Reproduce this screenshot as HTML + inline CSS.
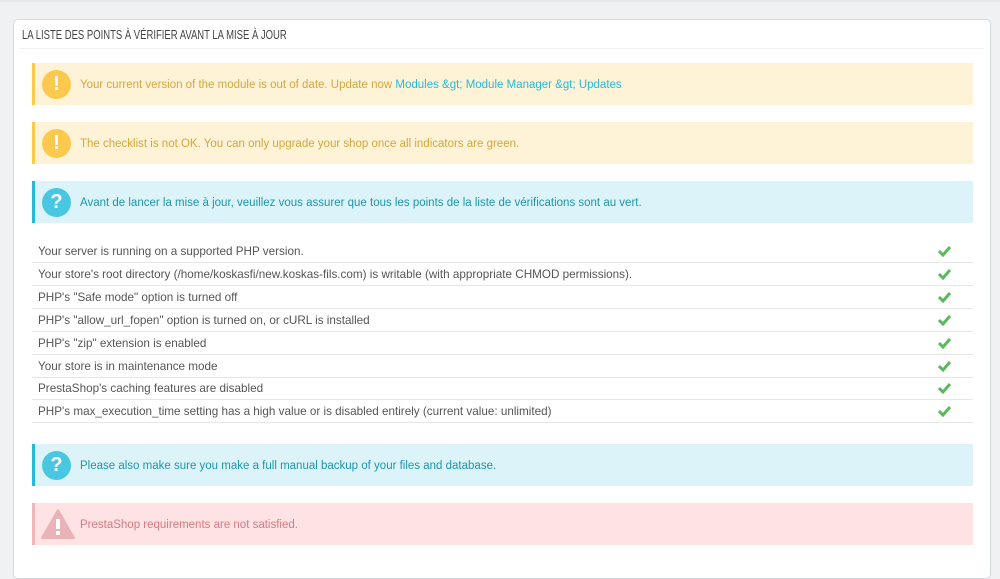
<!DOCTYPE html>
<html><head><meta charset="utf-8"><style>
*{box-sizing:border-box;margin:0;padding:0}
body{width:1000px;height:564px;background:#eff1f3;font-family:"Liberation Sans",sans-serif;font-size:11.5px;color:#555;overflow:hidden;position:relative}
.top{position:absolute;left:0;top:0;width:1000px;height:2px;background:#e4e6e8}
.panel{position:absolute;left:13px;top:19px;width:978px;height:560px;background:#fff;border:1px solid #d3d8db;border-radius:5px}
.hd{position:absolute;left:6px;top:0;width:964px;height:29px;border-bottom:1px solid #eee}
.hd span{position:absolute;left:2px;top:7px;font-size:13px;color:#444;transform:scaleX(.73);transform-origin:left;white-space:nowrap}
.al{position:absolute;left:18px;width:941px;height:42px;border-left:3px solid}
.al .ic{position:absolute;left:7px;top:7px;width:29px;height:29px;border-radius:50%;color:#fff;font-weight:bold;font-size:20px;text-align:center;line-height:29px}
.al .t{position:absolute;left:45px;top:16px;white-space:nowrap}
.w{background:#fff3d7;border-color:#fcc94f}.w .ic{background:#fcc94f}.w .t{color:#d2a63c}
.i{background:#dcf4f9;border-color:#25b9d7}.i .ic{background:#4ac7e0}.i .t{color:#1e94ab}
.d{background:#ffe2e4;border-color:#f0b7bb}.d .t{color:#d27c82}
a{color:#25b9d7;text-decoration:none}
.row{position:absolute;left:18px;width:941px;height:23px;border-bottom:1px solid #e6e6e6;color:#555;font-size:11.7px}
.row span{position:absolute;left:6px;top:5px}
.row svg{position:absolute;left:906px;top:5px}
</style></head><body>
<div class="top"></div>
<div class="panel">
<div class="hd"><span>LA LISTE DES POINTS À VÉRIFIER AVANT LA MISE À JOUR</span></div>
<div class="al w" style="top:43px"><div class="ic">!</div><div class="t">Your current version of the module is out of date. Update now <a>Modules &amp;gt; Module Manager &amp;gt; Updates</a></div></div>
<div class="al w" style="top:102px"><div class="ic">!</div><div class="t">The checklist is not OK. You can only upgrade your shop once all indicators are green.</div></div>
<div class="al i" style="top:161px"><div class="ic">?</div><div class="t">Avant de lancer la mise à jour, veuillez vous assurer que tous les points de la liste de vérifications sont au vert.</div></div>
<div class="row" style="top:220px"><span>Your server is running on a supported PHP version.</span><svg width="13" height="12"><path d="M1 6l4 4 7-8" stroke="#5cb85c" stroke-width="3" fill="none"/></svg></div>
<div class="row" style="top:243px"><span>Your store's root directory (/home/koskasfi/new.koskas-fils.com) is writable (with appropriate CHMOD permissions).</span><svg width="13" height="12"><path d="M1 6l4 4 7-8" stroke="#5cb85c" stroke-width="3" fill="none"/></svg></div>
<div class="row" style="top:266px"><span>PHP's "Safe mode" option is turned off</span><svg width="13" height="12"><path d="M1 6l4 4 7-8" stroke="#5cb85c" stroke-width="3" fill="none"/></svg></div>
<div class="row" style="top:289px"><span>PHP's "allow_url_fopen" option is turned on, or cURL is installed</span><svg width="13" height="12"><path d="M1 6l4 4 7-8" stroke="#5cb85c" stroke-width="3" fill="none"/></svg></div>
<div class="row" style="top:312px"><span>PHP's "zip" extension is enabled</span><svg width="13" height="12"><path d="M1 6l4 4 7-8" stroke="#5cb85c" stroke-width="3" fill="none"/></svg></div>
<div class="row" style="top:335px"><span>Your store is in maintenance mode</span><svg width="13" height="12"><path d="M1 6l4 4 7-8" stroke="#5cb85c" stroke-width="3" fill="none"/></svg></div>
<div class="row" style="top:357px"><span>PrestaShop's caching features are disabled</span><svg width="13" height="12"><path d="M1 6l4 4 7-8" stroke="#5cb85c" stroke-width="3" fill="none"/></svg></div>
<div class="row" style="top:380px"><span>PHP's max_execution_time setting has a high value or is disabled entirely (current value: unlimited)</span><svg width="13" height="12"><path d="M1 6l4 4 7-8" stroke="#5cb85c" stroke-width="3" fill="none"/></svg></div>
<div class="al i" style="top:424px"><div class="ic">?</div><div class="t">Please also make sure you make a full manual backup of your files and database.</div></div>
<div class="al d" style="top:483px"><svg style="position:absolute;left:6px;top:5px" width="34" height="31"><path d="M17 2L33 30H1Z" fill="#e9b3b7" stroke="#e9b3b7" stroke-linejoin="round" stroke-width="2"/><rect x="15" y="11" width="4" height="10" fill="#fff"/><rect x="15" y="23" width="4" height="4" fill="#fff"/></svg><div class="t">PrestaShop requirements are not satisfied.</div></div>
</div>
</body></html>
